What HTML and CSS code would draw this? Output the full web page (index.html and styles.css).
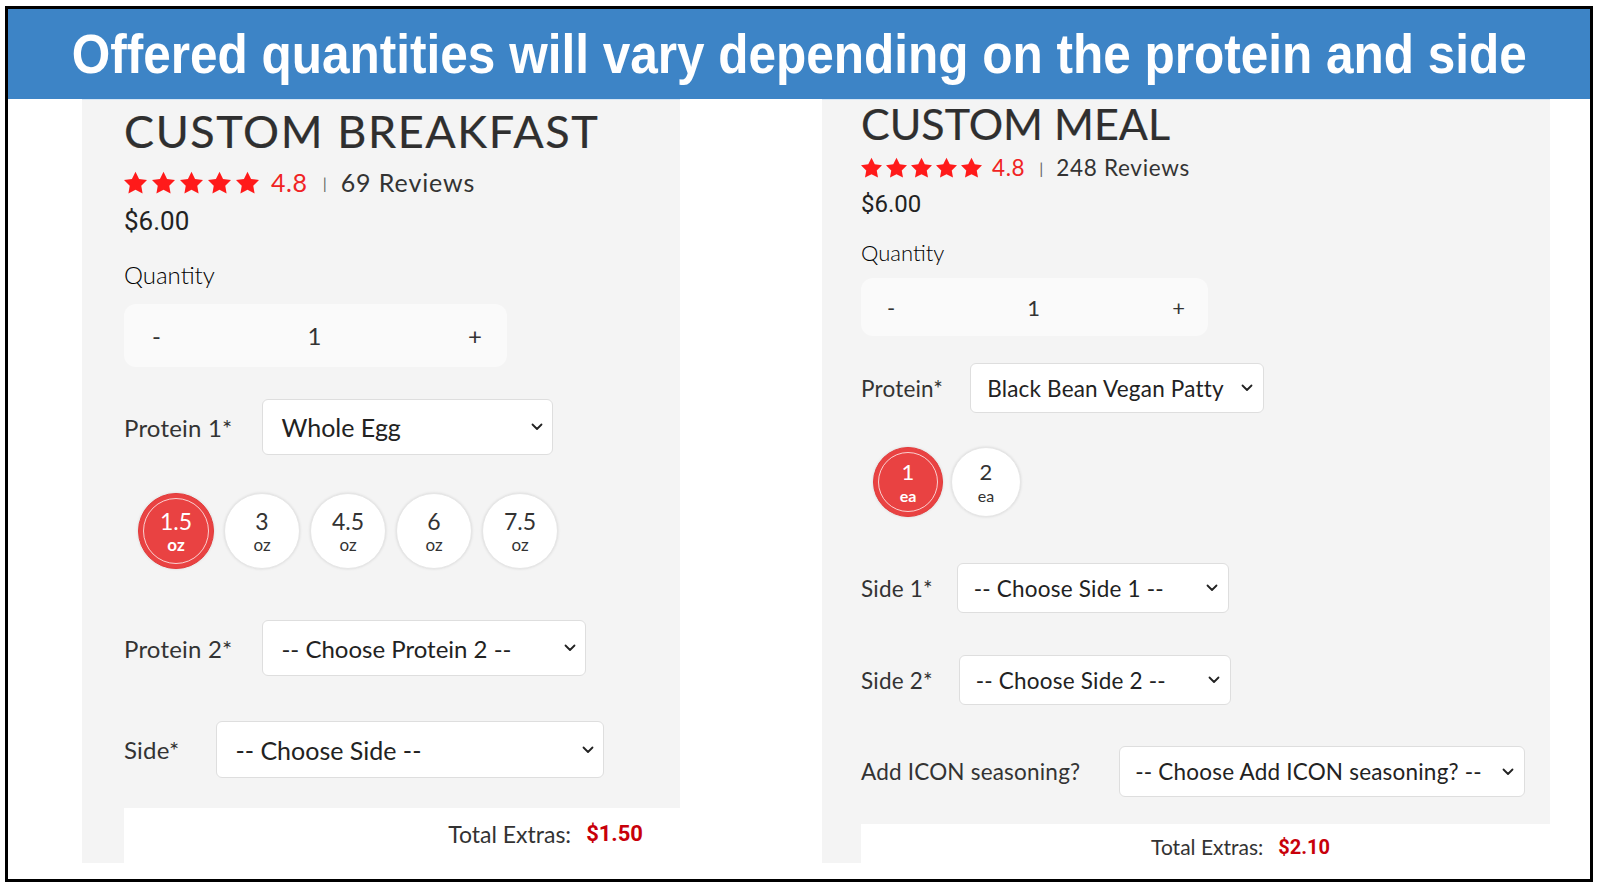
FILE: index.html
```html
<!DOCTYPE html>
<html lang="en">
<head>
  <meta charset="UTF-8">
  <title>Offered quantities</title>
  <link rel="stylesheet" href="styles.css">
</head>
<body>

<svg width="0" height="0" class="defs">
  <symbol id="star" viewBox="2 1.6 20 19.6">
    <path d="M12 2l3.09 6.26L22 9.27l-5 4.87 1.18 6.88L12 17.77l-6.18 3.25L7 14.14 2 9.27l6.91-1.01z"/>
  </symbol>
  <symbol id="chev" viewBox="0 0 12 8">
    <path d="M1.5 1.5L6 6l4.5-4.5" fill="none" stroke="currentColor" stroke-width="1.8" stroke-linecap="round" stroke-linejoin="round"/>
  </symbol>
</svg>

<div class="frame">
  <div class="banner"><span>Offered quantities will vary depending on the protein and side</span></div>

  <div class="panels">
    <!-- left: breakfast -->
    <div class="panel breakfast">
      <h1 class="title">CUSTOM BREAKFAST</h1>
      <div class="rating">
        <span class="stars">
          <svg><use href="#star"/></svg><svg><use href="#star"/></svg><svg><use href="#star"/></svg><svg><use href="#star"/></svg><svg><use href="#star"/></svg>
        </span>
        <span class="score">4.8</span>
        <span class="sep">|</span>
        <span class="reviews">69 Reviews</span>
      </div>
      <div class="price">$6.00</div>
      <div class="qty-label">Quantity</div>
      <div class="qty">
        <span>-</span><span>1</span><span>+</span>
      </div>

      <div class="field f-p1">
        <label>Protein 1*</label>
        <div class="select w-p1"><span>Whole Egg</span><svg><use href="#chev"/></svg></div>
      </div>

      <div class="sizes">
        <div class="size on"><b>1.5</b><small>oz</small></div>
        <div class="size"><b>3</b><small>oz</small></div>
        <div class="size"><b>4.5</b><small>oz</small></div>
        <div class="size"><b>6</b><small>oz</small></div>
        <div class="size"><b>7.5</b><small>oz</small></div>
      </div>

      <div class="field f-p2">
        <label>Protein 2*</label>
        <div class="select w-p2"><span>-- Choose Protein 2 --</span><svg><use href="#chev"/></svg></div>
      </div>

      <div class="field f-side">
        <label>Side*</label>
        <div class="select w-side"><span>-- Choose Side --</span><svg><use href="#chev"/></svg></div>
      </div>

      <div class="total">Total Extras:<strong>$1.50</strong></div>
    </div>

    <!-- right: meal -->
    <div class="panel meal">
      <h1 class="title">CUSTOM MEAL</h1>
      <div class="rating">
        <span class="stars">
          <svg><use href="#star"/></svg><svg><use href="#star"/></svg><svg><use href="#star"/></svg><svg><use href="#star"/></svg><svg><use href="#star"/></svg>
        </span>
        <span class="score">4.8</span>
        <span class="sep">|</span>
        <span class="reviews">248 Reviews</span>
      </div>
      <div class="price">$6.00</div>
      <div class="qty-label">Quantity</div>
      <div class="qty">
        <span>-</span><span>1</span><span>+</span>
      </div>

      <div class="field f-pr">
        <label>Protein*</label>
        <div class="select w-pr"><span>Black Bean Vegan Patty</span><svg><use href="#chev"/></svg></div>
      </div>

      <div class="sizes">
        <div class="size on"><b>1</b><small>ea</small></div>
        <div class="size"><b>2</b><small>ea</small></div>
      </div>

      <div class="field f-s1">
        <label>Side 1*</label>
        <div class="select w-s"><span>-- Choose Side 1 --</span><svg><use href="#chev"/></svg></div>
      </div>

      <div class="field f-s2">
        <label>Side 2*</label>
        <div class="select w-s"><span>-- Choose Side 2 --</span><svg><use href="#chev"/></svg></div>
      </div>

      <div class="field f-icon">
        <label>Add ICON seasoning?</label>
        <div class="select w-icon"><span>-- Choose Add ICON seasoning? --</span><svg><use href="#chev"/></svg></div>
      </div>

      <div class="total">Total Extras:<strong>$2.10</strong></div>
    </div>
  </div>
</div>

</body>
</html>
```

FILE: styles.css
```css
body {
  margin: 0;
  background: #fff;
  font-family: 'Lato', 'Noto Sans', sans-serif;
  color: #333;
}
.defs {
  position: absolute;
}
.frame {
  box-sizing: border-box;
  width: 1588px;
  height: 876px;
  margin: 6px 0 0 5px;
  border: 3px solid #000;
  display: flex;
  flex-direction: column;
}
.banner {
  height: 90px;
  background: #3d84c6;
  display: flex;
  align-items: center;
  justify-content: center;
  overflow: hidden;
}
.banner span {
  display: inline-block;
  font-family: 'Liberation Sans', Arial, sans-serif;
  font-weight: bold;
  font-size: 55px;
  line-height: 1;
  color: #fff;
  white-space: nowrap;
  transform: scaleX(0.9);
}
.panels {
  display: flex;
  align-items: flex-start;
}
.panel {
  background: #f4f4f4;
  box-sizing: border-box;
  height: 764px;
  display: flex;
  flex-direction: column;
  align-items: flex-start;
  border-top: 1px solid #d6e6f4;
}
.breakfast {
  width: 598px;
  margin-left: 74px;
  padding: 9px 0 0 42px;
}
.meal {
  width: 728px;
  margin-left: 142px;
  padding: 0 0 0 39px;
}

.title {
  margin: 0;
  font-family: 'Lato', sans-serif;
  font-weight: 400;
  font-size: 45px;
  line-height: 1;
  letter-spacing: 1.6px;
  color: #2f2f2f;
  -webkit-text-stroke: 0.2px #2f2f2f;
}
.meal .title {
  font-size: 43px;
  margin-top: 2px;
  letter-spacing: 0;
}

.rating {
  display: flex;
  align-items: center;
  height: 26px;
  margin-top: 15px;
  font-size: 24px;
}
.meal .rating {
  height: 24px;
  margin-top: 10px;
  font-size: 22.5px;
}
.stars {
  display: flex;
  gap: 5px;
  color: #ff1a1a;
  fill: #ff1a1a;
}
.stars svg {
  width: 23px;
  height: 23px;
}
.meal .stars {
  gap: 4px;
}
.meal .stars svg {
  width: 21px;
  height: 21px;
}
.score {
  color: #f02323;
  font-size: 25px;
  margin-left: 12px;
  letter-spacing: 0.6px;
}
.meal .score {
  font-size: 22.5px;
  margin-left: 10px;
}
.sep {
  color: #666;
  font-size: 16px;
  margin: 0 14px 0 15px;
}
.meal .sep {
  margin: 0 13px 0 14px;
}
.reviews {
  color: #333;
  font-size: 25px;
  letter-spacing: 0.9px;
}
.meal .reviews {
  font-size: 22.5px;
  letter-spacing: 0.7px;
}

.price {
  font-family: 'Roboto', sans-serif;
  font-size: 26px;
  line-height: 30px;
  margin-top: 11px;
  color: #222;
}
.meal .price {
  font-size: 24px;
  margin-top: 10px;
}

.qty-label {
  font-weight: 300;
  font-size: 24px;
  line-height: 30px;
  margin-top: 24px;
  color: #000;
}
.meal .qty-label {
  font-size: 22px;
  line-height: 28px;
  margin-top: 20px;
}

.qty {
  box-sizing: border-box;
  width: 383px;
  height: 63px;
  margin-top: 14px;
  background: #fafafa;
  border-radius: 12px;
  display: flex;
  align-items: center;
  justify-content: space-between;
  padding: 0 25px 0 28px;
  font-size: 24px;
  color: #333;
}
.meal .qty {
  width: 347px;
  height: 59px;
  margin-top: 11px;
  padding: 0 23px 0 26px;
  font-size: 22px;
}

.field {
  display: flex;
  align-items: center;
  gap: 30px;
}
.field label {
  font-size: 24px;
  letter-spacing: 0.2px;
  color: #333;
}
.meal .field {
  gap: 27px;
}
.meal .field label {
  font-size: 22.5px;
}
.select {
  box-sizing: border-box;
  height: 56px;
  background: #fff;
  border: 1px solid #dedede;
  border-radius: 6px;
  display: flex;
  align-items: center;
  justify-content: space-between;
  padding: 0 9px 0 18px;
  font-size: 25px;
  color: #222;
}
.select svg {
  width: 12px;
  height: 8px;
  color: #222;
}
.meal .select {
  height: 50px;
  padding: 0 10px 0 16px;
  font-size: 22.5px;
  letter-spacing: 0.2px;
}

.f-p1 { margin-top: 32px; }
.f-p2 { margin-top: 51px; }
.f-side { margin-top: 45px; gap: 37px; }
.w-p1 { width: 291px; }
.w-p2 { width: 324px; }
.w-side { width: 388px; height: 57px; }
.w-p2 span { font-size: 24px; }

.f-pr { margin-top: 27px; }
.meal .f-s1 { margin-top: 46px; gap: 24px; }
.meal .f-s2 { margin-top: 42px; gap: 26px; }
.meal .f-icon { margin-top: 41px; gap: 39px; }
.w-pr { width: 294px; }
.w-s { width: 272px; }
.meal .w-icon { width: 406px; height: 51px; padding-left: 15px; }

.sizes {
  display: flex;
  gap: 10px;
  margin: 38px 0 0 14px;
}
.size {
  box-sizing: border-box;
  width: 76px;
  height: 76px;
  border-radius: 50%;
  background: #fff;
  border: 1px solid #e6e6e6;
  box-shadow: 0 0 3px rgba(0, 0, 0, 0.12);
  display: flex;
  flex-direction: column;
  align-items: center;
  justify-content: center;
  color: #333;
  position: relative;
}
.size b {
  font-weight: 400;
  font-size: 23px;
  line-height: 24px;
}
.size small {
  font-size: 17px;
  line-height: 18px;
  margin-top: 3px;
}
.size.on {
  background: #e94242;
  border-color: #e23a3a;
  color: #fff;
}
.size.on::after {
  content: "";
  position: absolute;
  inset: 4px;
  border-radius: 50%;
  border: 1px solid rgba(255, 255, 255, 0.75);
}
.size.on small {
  font-weight: 700;
}
.meal .sizes {
  gap: 8px;
  margin: 34px 0 0 12px;
}
.meal .size {
  width: 70px;
  height: 70px;
}
.meal .size b {
  font-size: 22px;
}
.meal .size small {
  font-size: 16px;
}

.total {
  align-self: stretch;
  display: flex;
  align-items: center;
  justify-content: flex-end;
  box-sizing: border-box;
  height: 55px;
  margin-top: 30px;
  background: #fff;
  padding: 0 37px 4px 0;
  font-size: 23px;
  color: #333;
}
.total strong {
  font-family: 'Roboto', sans-serif;
  font-weight: 700;
  font-size: 22px;
  color: #c8000a;
  margin-left: 15px;
}
.meal .total {
  height: 39px;
  margin-top: 27px;
  padding: 6px 220px 0 0;
  font-size: 21px;
}
.meal .total strong {
  font-size: 20px;
  margin-left: 15px;
}
```
